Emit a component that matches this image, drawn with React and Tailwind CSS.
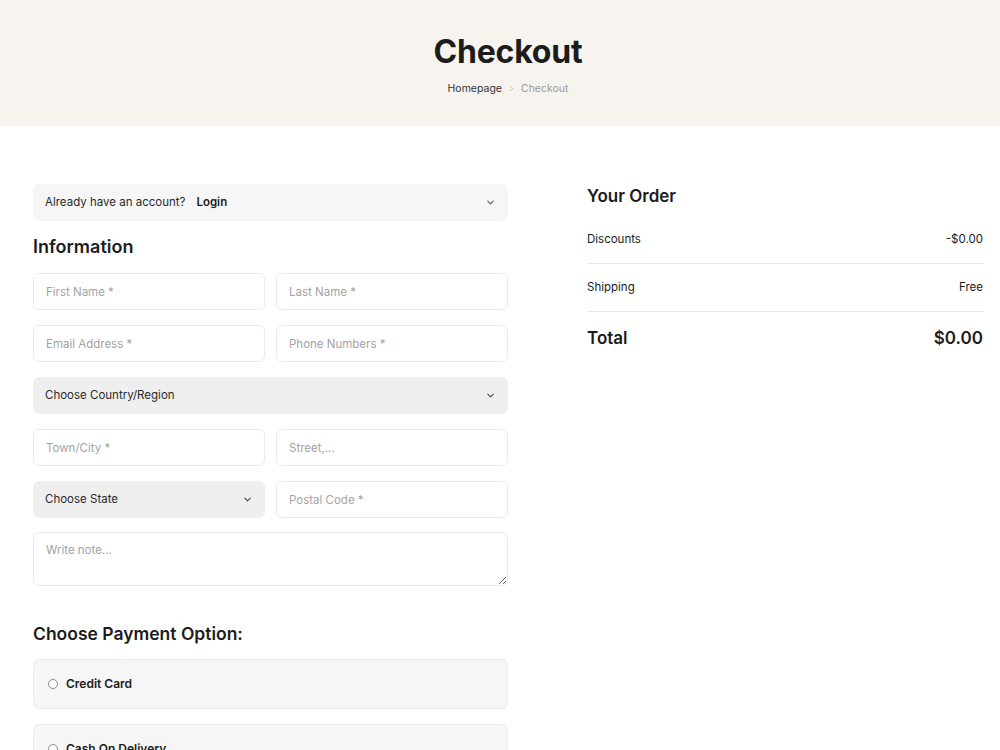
import React from 'react';

const Chevron = ({ className = '' }) => (
  <svg viewBox="0 0 24 24" width="11" height="11" fill="none" stroke="currentColor" strokeWidth="2.2" strokeLinecap="round" strokeLinejoin="round" className={className}>
    <path d="M6 9l6 6 6-6" />
  </svg>
);

const Field = ({ placeholder }) => (
  <input
    type="text"
    placeholder={placeholder}
    className="h-[37px] w-full rounded-md border border-[#ebebeb] bg-white px-3 text-[11.5px] text-[#1c1c1c] outline-none placeholder:text-[#a3a3a3]"
  />
);

const SelectBox = ({ label }) => (
  <div className="flex h-[37px] w-full items-center justify-between rounded-md bg-[#efefef] pl-3 pr-[12px] text-[11.5px] text-[#2a2a2a]">
    <span>{label}</span>
    <Chevron className="text-[#444]" />
  </div>
);

const PayOption = ({ label }) => (
  <label className="flex h-[50px] items-center gap-2 rounded-md border border-[#ececec] bg-[#f6f6f6] px-[14px]">
    <span className="h-[10px] w-[10px] rounded-full border border-[#8a8a8a] bg-white" />
    <span className="text-[12px] font-semibold text-[#1c1c1c]">{label}</span>
  </label>
);

const OrderRow = ({ label, value }) => (
  <div className="flex h-[48px] items-center justify-between border-b border-[#e9e9e9] text-[11.5px] text-[#1c1c1c]">
    <span>{label}</span>
    <span>{value}</span>
  </div>
);

export default function App() {
  return (
    <div className="min-h-screen bg-white text-[#1c1c1c]" style={{ fontFamily: 'Inter, "Noto Sans", sans-serif' }}>
      <header className="flex h-[126px] flex-col items-center bg-[#f7f4ef] pl-4 pt-[32px]">
        <h1 className="text-[32px] font-bold leading-[40px] tracking-[-0.2px] text-[#1c1c1c]">Checkout</h1>
        <nav className="mt-[9px] flex items-center gap-[5px] text-[10.5px]">
          <span className="text-[#333]">Homepage</span>
          <svg viewBox="0 0 24 24" width="9" height="9" fill="none" stroke="#a8a8a8" strokeWidth="2" strokeLinecap="round" strokeLinejoin="round">
            <path d="M9 6l6 6-6 6" />
          </svg>
          <span className="text-[#9a9a9a]">Checkout</span>
        </nav>
      </header>

      <main className="flex gap-[79px] pl-[33px] pr-[17px] pt-[58px]">
        <section className="w-[475px] shrink-0">
          <div className="flex h-[37px] items-center justify-between rounded-md bg-[#f6f6f6] pl-3 pr-[12px] text-[11.5px]">
            <div className="flex items-center gap-[11px]">
              <span className="text-[#2a2a2a]">Already have an account?</span>
              <span className="font-semibold">Login</span>
            </div>
            <Chevron className="text-[#555]" />
          </div>

          <h2 className="mt-[14px] text-[18px] font-semibold leading-[24px]">Information</h2>

          <div className="mt-[14px] flex flex-col gap-[15px]">
            <div className="grid grid-cols-2 gap-[11px]">
              <Field placeholder="First Name *" />
              <Field placeholder="Last Name *" />
            </div>
            <div className="grid grid-cols-2 gap-[11px]">
              <Field placeholder="Email Address *" />
              <Field placeholder="Phone Numbers *" />
            </div>
            <SelectBox label="Choose Country/Region" />
            <div className="grid grid-cols-2 gap-[11px]">
              <Field placeholder="Town/City *" />
              <Field placeholder="Street,..." />
            </div>
            <div className="grid grid-cols-2 gap-[11px]">
              <SelectBox label="Choose State" />
              <Field placeholder="Postal Code *" />
            </div>
            <textarea
              placeholder="Write note..."
              className="-mt-[1px] h-[54px] w-full rounded-md border border-[#ebebeb] bg-white px-3 py-[9px] text-[11.5px] outline-none placeholder:text-[#a3a3a3]"
            />
          </div>

          <h2 className="mt-[36px] text-[17.5px] font-semibold leading-[24px]">Choose Payment Option:</h2>

          <div className="mt-[13px] flex flex-col gap-[15px]">
            <PayOption label="Credit Card" />
            <PayOption label="Cash On Delivery" />
          </div>
        </section>

        <aside className="flex-1">
          <h2 className="text-[17px] font-semibold leading-[24px]">Your Order</h2>
          <div className="mt-[8px]">
            <OrderRow label="Discounts" value="-$0.00" />
            <OrderRow label="Shipping" value="Free" />
            <div className="flex h-[53px] items-center justify-between text-[17px] font-semibold">
              <span>Total</span>
              <span>$0.00</span>
            </div>
          </div>
        </aside>
      </main>
    </div>
  );
}
